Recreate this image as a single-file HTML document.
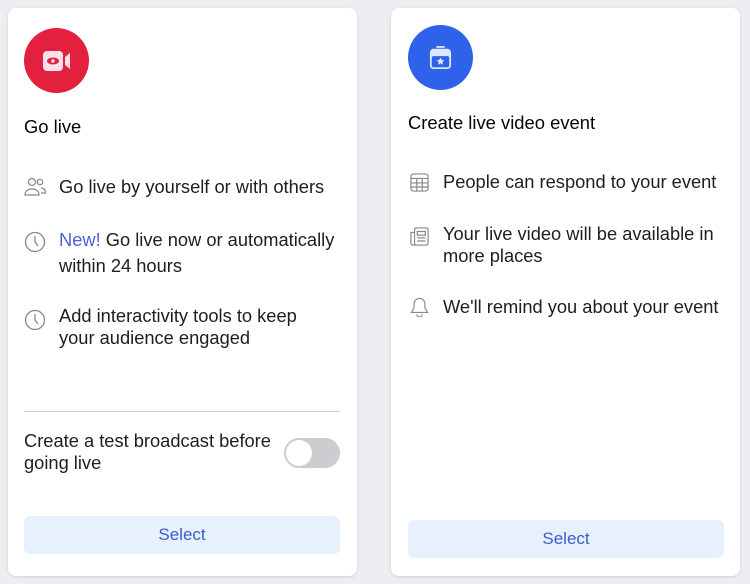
<!DOCTYPE html><html><head><style>
body{margin:0;width:750px;height:584px;background:#eceef2;font-family:"Liberation Sans",sans-serif;color:#1c1e21;position:relative;overflow:hidden}
.card{position:absolute;top:8px;width:349px;height:568px;background:#fff;border-radius:8px;box-shadow:0 1px 3px rgba(0,0,0,.12)}
.t{position:absolute;font-size:18.3px;line-height:22px;white-space:nowrap}
.h{position:absolute;font-size:18.4px;font-weight:normal;color:#050505}
.ic{position:absolute}
.btn{position:absolute;height:38px;background:#e7f1fd;border-radius:6px;color:#3c5ad0;font-size:17px;text-align:center;line-height:38px}
</style></head><body>
<div class="card" style="left:8px"></div>
<div class="card" style="left:391px"></div>

<div style="position:absolute;left:24px;top:28px;width:65px;height:65px;border-radius:50%;background:#e4203f"></div>
<svg class="ic" style="left:42px;top:50px" width="30" height="22" viewBox="0 0 30 22"><rect x="1" y="1" width="20" height="20" rx="4" fill="#fde1ea"/><ellipse cx="11" cy="11" rx="6" ry="3.5" fill="#e4203f"/><circle cx="11" cy="11" r="1.8" fill="#fde1ea"/><path d="M23 7 L28 3 V19 L23 15Z" fill="#fde1ea"/></svg>
<div class="h" style="left:24px;top:116px">Go live</div>

<svg class="ic" style="left:24px;top:177px" width="22" height="20" viewBox="0 0 22 20" fill="none" stroke="#888" stroke-width="1.2"><circle cx="8" cy="5" r="3.5"/><path d="M1 18c0-4 3-6 7-6s7 2 7 6z"/><circle cx="16" cy="5" r="2.8"/><path d="M17 11c3 0 4.5 2 4.5 5H17"/></svg>
<div class="t" style="left:59px;top:176px">Go live by yourself or with others</div>
<svg class="ic" style="left:24px;top:231px" width="22" height="22" viewBox="0 0 22 22" fill="none" stroke="#888" stroke-width="1.3"><circle cx="11" cy="11" r="9.5"/><path d="M11 5v6l3 4"/></svg>
<div class="t" style="left:59px;top:227px;line-height:26px"><span style="color:#4b5fd6">New!</span> Go live now or automatically<br>within 24 hours</div>
<svg class="ic" style="left:24px;top:309px" width="22" height="22" viewBox="0 0 22 22" fill="none" stroke="#888" stroke-width="1.3"><circle cx="11" cy="11" r="9.5"/><path d="M11 5v6l3 4"/></svg>
<div class="t" style="left:59px;top:305px">Add interactivity tools to keep<br>your audience engaged</div>
<div style="position:absolute;left:24px;top:411px;width:316px;height:1px;background:#ccc"></div>
<div class="t" style="left:24px;top:430px">Create a test broadcast before<br>going live</div>
<div style="position:absolute;left:284px;top:438px;width:56px;height:30px;border-radius:15px;background:#cdcdd1"></div>
<div style="position:absolute;left:286px;top:440px;width:26px;height:26px;border-radius:50%;background:#fff"></div>
<div class="btn" style="left:24px;top:516px;width:316px">Select</div>

<div style="position:absolute;left:408px;top:25px;width:65px;height:65px;border-radius:50%;background:#2f62ea"></div>
<svg class="ic" style="left:429px;top:46px" width="23" height="24" viewBox="0 0 25 26"><rect x="1" y="3" width="23" height="22" rx="4" fill="#dbe6ff"/><rect x="3" y="11" width="19" height="12" rx="2" fill="#2f62ea"/><rect x="8" y="0" width="9" height="2" fill="#dbe6ff"/><path d="M12.5 12.5l1.3 2.6 2.8.4-2 2 .5 2.8-2.6-1.4-2.6 1.4.5-2.8-2-2 2.8-.4z" fill="#dbe6ff"/></svg>
<div class="h" style="left:408px;top:112px">Create live video event</div>

<svg class="ic" style="left:410px;top:173px" width="19" height="19" viewBox="0 0 21 21" fill="none" stroke="#888" stroke-width="1.3"><rect x="1" y="1" width="19" height="19" rx="3"/><path d="M1 6h19M1 11h19M1 15.5h19M7.5 6v14M13.5 6v14"/></svg>
<div class="t" style="left:443px;top:171px">People can respond to your event</div>
<svg class="ic" style="left:410px;top:227px" width="19" height="19" viewBox="0 0 21 21" fill="none" stroke="#888" stroke-width="1.3"><rect x="5" y="1" width="15" height="19" rx="2"/><path d="M5 6H1v12a2 2 0 002 2h3M8 5h9v4H8zM8 12h9M8 15.5h9"/></svg>
<div class="t" style="left:443px;top:223px">Your live video will be available in<br>more places</div>
<svg class="ic" style="left:410px;top:297px" width="19" height="20" viewBox="0 0 21 22" fill="none" stroke="#888" stroke-width="1.3"><path d="M10.5 1.5c-3.5 0-6 2.7-6 6v4.5L1.5 17h18l-3-5V7.5c0-3.3-2.5-6-6-6zM7.5 19a3 3 0 006 0"/></svg>
<div class="t" style="left:443px;top:296px">We'll remind you about your event</div>
<div class="btn" style="left:408px;top:520px;width:316px">Select</div>
</body></html>
